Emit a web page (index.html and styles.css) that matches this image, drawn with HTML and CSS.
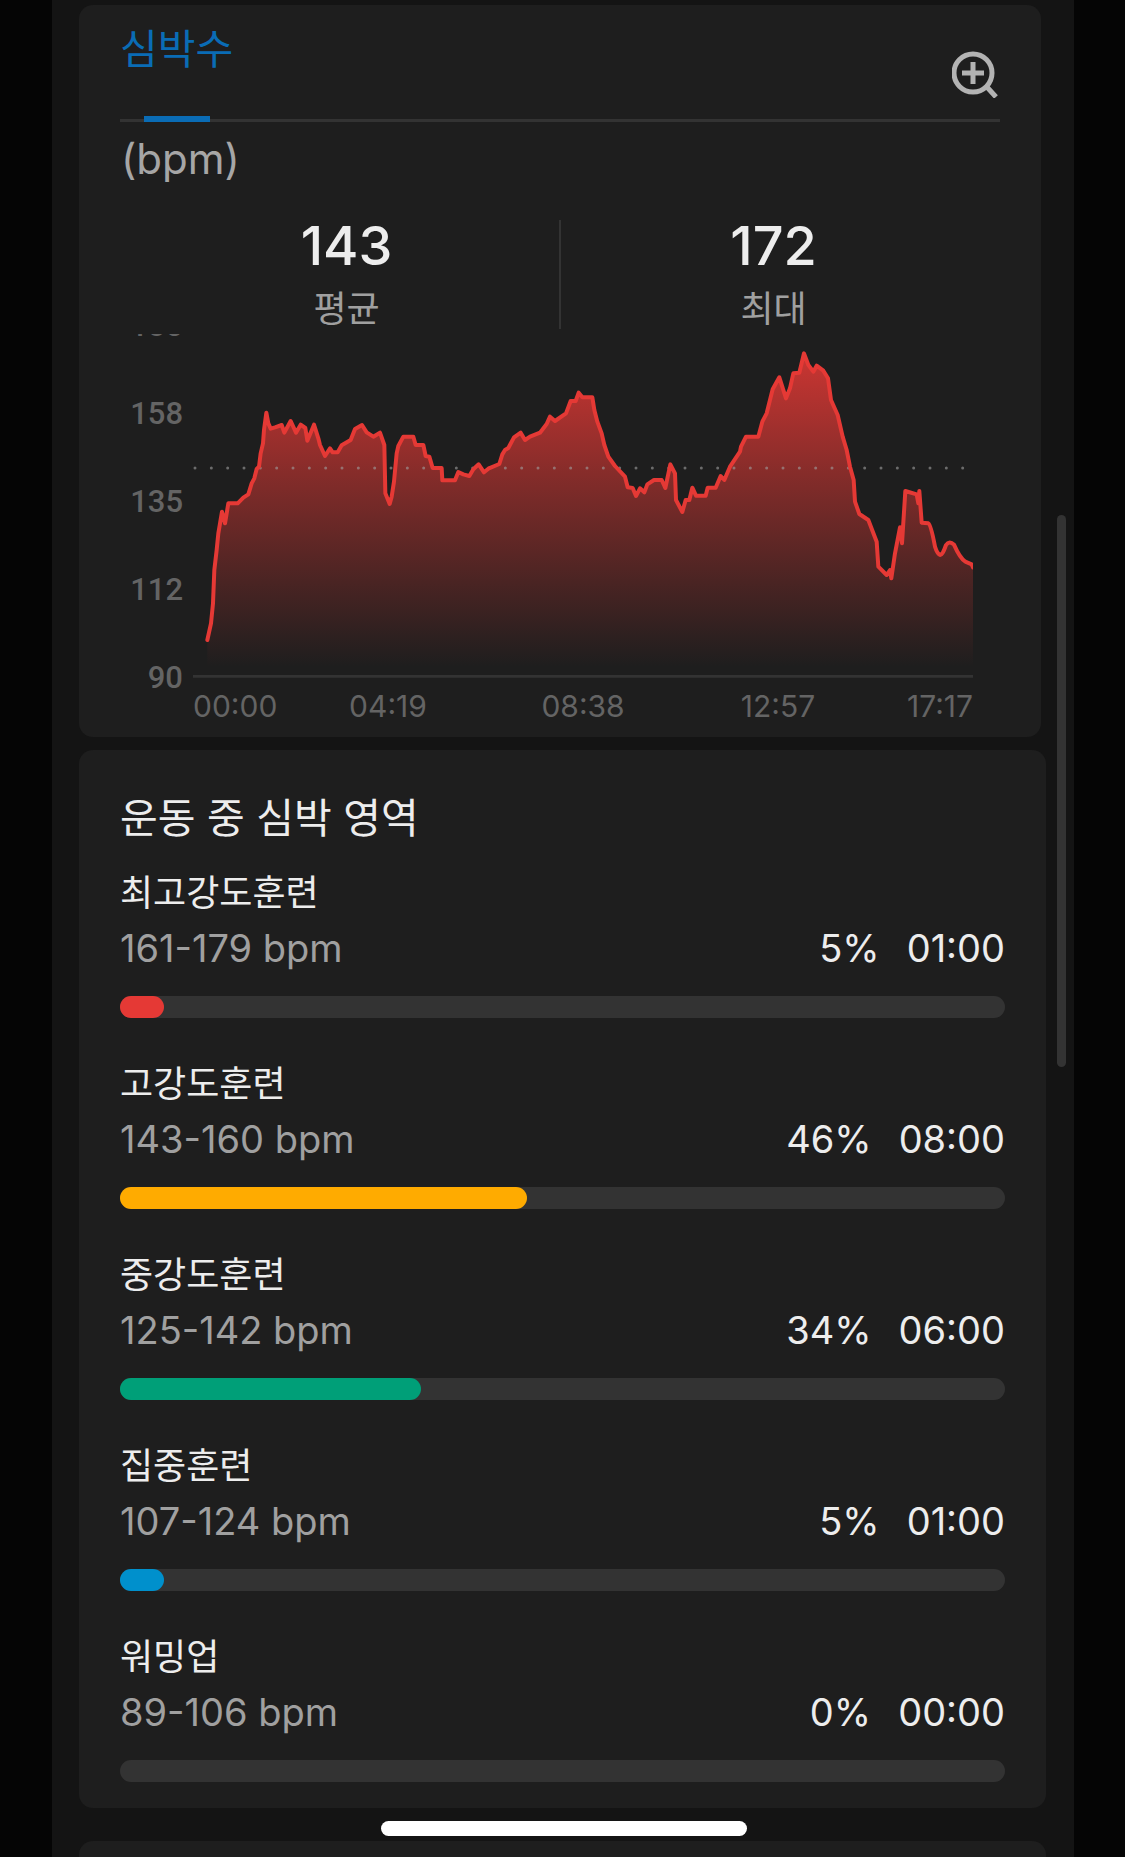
FILE: index.html
```html
<!DOCTYPE html>
<html lang="ko">
<head>
<meta charset="utf-8">
<meta name="viewport" content="width=device-width, initial-scale=1">
<title>심박수</title>
<link rel="stylesheet" href="styles.css">
</head>
<body>
<main class="screen">
  <section class="card card-chart">
    <header class="tabs">
      <a class="tab" href="#heart-rate">심박수</a>
      <button class="zoom" type="button" aria-label="확대">
        <svg viewBox="0 0 48 48" width="48" height="48" fill="none" stroke="currentColor" stroke-width="5">
          <circle cx="21" cy="23" r="19"/>
          <path d="M21 12v22M10 23h22M34 36l10 11"/>
        </svg>
      </button>
    </header>
    <p class="unit" id="heart-rate">(bpm)</p>
    <div class="stats">
      <div class="stat"><strong class="stat-value">143</strong><span class="stat-label">평균</span></div>
      <div class="stat-divider"></div>
      <div class="stat"><strong class="stat-value">172</strong><span class="stat-label">최대</span></div>
    </div>
    <div class="chart">
      <div class="y-axis"><span>180</span><span>158</span><span>135</span><span>112</span><span>90</span></div>
      <div class="plot">
        <svg class="plot-svg" viewBox="579 42 2340 1041" preserveAspectRatio="none" aria-hidden="true">
          <defs>
            <linearGradient id="fade" gradientUnits="userSpaceOnUse" x1="0" y1="100" x2="0" y2="1040">
              <stop offset="0" stop-color="#e53935" stop-opacity=".87"/>
              <stop offset=".43" stop-color="#e53935" stop-opacity=".48"/>
              <stop offset=".72" stop-color="#e53935" stop-opacity=".23"/>
              <stop offset="1" stop-color="#e53935" stop-opacity="0"/>
            </linearGradient>
            <path id="pulse" d="M622,960 633,910 639,850 643,750 650,690 655,640 666,575 675,610 685,550 713,550 730,533 745,523 755,490 763,475 770,447 777,440 782,400 789,370 792,330 799,278 805,310 812,326 825,322 845,315 853,338 872,303 888,338 902,314 916,324 922,362 942,314 955,355 960,375 975,408 990,385 998,397 1013,397 1025,376 1052,360 1065,327 1086,315 1100,337 1120,350 1140,338 1153,375 1156,520 1169,552 1175,530 1182,485 1190,400 1195,378 1210,350 1240,350 1247,375 1270,375 1277,408 1288,410 1298,444 1325,444 1327,481 1365,481 1375,456 1390,463 1408,468 1420,448 1436,433 1452,457 1465,446 1498,432 1507,403 1515,390 1525,384 1542,352 1562,338 1575,360 1590,350 1620,338 1640,312 1650,290 1665,303 1698,280 1712,243 1727,243 1736,218 1747,232 1777,232 1783,270 1792,305 1805,340 1813,375 1825,410 1845,438 1875,470 1883,502 1898,504 1908,528 1920,505 1933,517 1942,493 1962,480 1985,480 1996,504 2011,433 2025,460 2028,540 2047,576 2057,540 2068,540 2077,503 2088,527 2117,527 2123,503 2147,503 2162,468 2173,480 2190,440 2220,395 2223,380 2238,350 2275,350 2287,305 2300,280 2318,208 2338,172 2358,235 2370,205 2380,160 2398,158 2412,100 2425,135 2440,155 2450,137 2470,152 2484,175 2493,240 2513,285 2528,350 2540,390 2550,440 2561,480 2565,545 2578,582 2605,600 2630,665 2635,740 2660,765 2670,750 2674,775 2685,700 2700,622 2706,670 2716,513 2750,523 2755,550 2758,513 2765,608 2785,610Q2793,615 2805,680Q2812,703 2821,705Q2828,705 2838,675Q2848,660 2862,674Q2880,715 2896,725L2915,733 2919,742"/>
            <path id="area" d="M622,960 633,910 639,850 643,750 650,690 655,640 666,575 675,610 685,550 713,550 730,533 745,523 755,490 763,475 770,447 777,440 782,400 789,370 792,330 799,278 805,310 812,326 825,322 845,315 853,338 872,303 888,338 902,314 916,324 922,362 942,314 955,355 960,375 975,408 990,385 998,397 1013,397 1025,376 1052,360 1065,327 1086,315 1100,337 1120,350 1140,338 1153,375 1156,520 1169,552 1175,530 1182,485 1190,400 1195,378 1210,350 1240,350 1247,375 1270,375 1277,408 1288,410 1298,444 1325,444 1327,481 1365,481 1375,456 1390,463 1408,468 1420,448 1436,433 1452,457 1465,446 1498,432 1507,403 1515,390 1525,384 1542,352 1562,338 1575,360 1590,350 1620,338 1640,312 1650,290 1665,303 1698,280 1712,243 1727,243 1736,218 1747,232 1777,232 1783,270 1792,305 1805,340 1813,375 1825,410 1845,438 1875,470 1883,502 1898,504 1908,528 1920,505 1933,517 1942,493 1962,480 1985,480 1996,504 2011,433 2025,460 2028,540 2047,576 2057,540 2068,540 2077,503 2088,527 2117,527 2123,503 2147,503 2162,468 2173,480 2190,440 2220,395 2223,380 2238,350 2275,350 2287,305 2300,280 2318,208 2338,172 2358,235 2370,205 2380,160 2398,158 2412,100 2425,135 2440,155 2450,137 2470,152 2484,175 2493,240 2513,285 2528,350 2540,390 2550,440 2561,480 2565,545 2578,582 2605,600 2630,665 2635,740 2660,765 2670,750 2674,775 2685,700 2700,622 2706,670 2716,513 2750,523 2755,550 2758,513 2765,608 2785,610Q2793,615 2805,680Q2812,703 2821,705Q2828,705 2838,675Q2848,660 2862,674Q2880,715 2896,725L2915,733 2919,742V1066H622Z"/>
          </defs>
          <use href="#area" fill="url(#fade)"/>
          <path class="average" d="M585,444H2900"/>
          <path class="baseline" d="M579,1069H2919"/>
          <use class="pulse" href="#pulse"/>
        </svg>
        <div class="x-axis"><span>00:00</span><span>04:19</span><span>08:38</span><span>12:57</span><span>17:17</span></div>
      </div>
    </div>
  </section>

  <section class="card card-zones">
    <h2 class="zones-title">운동 중 심박 영역</h2>
    <ul class="zones">
      <li class="zone">
        <h3 class="zone-name">최고강도훈련</h3>
        <div class="zone-row"><span class="zone-range">161-179 bpm</span><span>5%</span><span>01:00</span></div>
        <div class="bar"><div class="fill fill-max" style="width:5%"></div></div>
      </li>
      <li class="zone">
        <h3 class="zone-name">고강도훈련</h3>
        <div class="zone-row"><span class="zone-range">143-160 bpm</span><span>46%</span><span>08:00</span></div>
        <div class="bar"><div class="fill fill-high" style="width:46%"></div></div>
      </li>
      <li class="zone">
        <h3 class="zone-name">중강도훈련</h3>
        <div class="zone-row"><span class="zone-range">125-142 bpm</span><span>34%</span><span>06:00</span></div>
        <div class="bar"><div class="fill fill-mid" style="width:34%"></div></div>
      </li>
      <li class="zone">
        <h3 class="zone-name">집중훈련</h3>
        <div class="zone-row"><span class="zone-range">107-124 bpm</span><span>5%</span><span>01:00</span></div>
        <div class="bar"><div class="fill fill-focus" style="width:5%"></div></div>
      </li>
      <li class="zone">
        <h3 class="zone-name">워밍업</h3>
        <div class="zone-row"><span class="zone-range">89-106 bpm</span><span>0%</span><span>00:00</span></div>
        <div class="bar"></div>
      </li>
    </ul>
  </section>

  <section class="card card-next"></section>
</main>
<div class="scroll-thumb"></div>
<div class="home-indicator"></div>
</body>
</html>
```
FILE: styles.css
```css
* { box-sizing: border-box; }

body {
  margin: 0;
  padding: 0 51px 0 52px;
  background: #050505;
  color: #ededed;
  font-family: Inter, "Noto Sans CJK KR", sans-serif;
}

h2, h3, p, ul { margin: 0; padding: 0; font-weight: 400; }
ul { list-style: none; }

.screen {
  min-height: 100vh;
  display: flex;
  flex-direction: column;
  padding: 5px 28px 0 27px;
  background: #141414;
}

.card {
  padding: 0 41px;
  border-radius: 14px;
  background: #1e1e1e;
}

.card-chart { margin-right: 5px; padding-bottom: 12px; }

.tabs {
  position: relative;
  display: flex;
  justify-content: space-between;
  height: 117px;
  border-bottom: 3px solid #333;
}
.tabs::after {
  content: "";
  position: absolute;
  left: 24px;
  bottom: -3px;
  width: 66px;
  height: 6px;
  background: #0a6cb5;
}
.tab {
  padding-top: 14px;
  color: #0a6cb5;
  font-size: 41px;
  line-height: 60px;
  text-decoration: none;
}
.zoom {
  align-self: flex-start;
  margin-top: 45px;
  padding: 0;
  border: 0;
  background: none;
  color: #b3b3b3;
}
.zoom svg { display: block; }

.unit {
  margin-top: 9px;
  padding-left: 1px;
  color: #a6a6a6;
  font-size: 42px;
  line-height: 56px;
}

.stats {
  display: flex;
  align-items: center;
  margin: 29px 14px 0;
  height: 116px;
}
.stat {
  flex: 1;
  display: flex;
  flex-direction: column;
  align-items: center;
  gap: 9px;
}
.stat-value { font-size: 54px; font-weight: 500; line-height: 60px; }
.stat-label { color: #a0a0a0; font-size: 36px; line-height: 48px; }
.stat-divider { width: 2px; height: 109px; background: #333; }

.chart {
  display: flex;
  gap: 10px;
  height: 391px;
  margin: 2px 27px 0 0;
  overflow: hidden;
}
.y-axis {
  width: 63px;
  margin-top: -52px;
  display: flex;
  flex-direction: column;
  color: #646464;
  font-family: Roboto, sans-serif;
  font-size: 31px;
  font-weight: 500;
  line-height: 88px;
  text-align: right;
}
.plot { flex: 1; min-width: 0; }
.plot-svg { display: block; width: 100%; height: 347px; }
.average {
  fill: none;
  stroke: #a0a0a0;
  stroke-opacity: .6;
  stroke-width: 9;
  stroke-linecap: round;
  stroke-dasharray: 0 49;
}
.baseline { stroke: #333; stroke-width: 8; }
.pulse {
  fill: none;
  stroke: #e53935;
  stroke-width: 12;
  stroke-linejoin: round;
  stroke-linecap: round;
}
.x-axis {
  display: grid;
  grid-template-columns: 1fr 2fr 2fr 2fr 1fr;
  margin-top: 7px;
  color: #646464;
  font-size: 30px;
  line-height: 36px;
  text-align: center;
}
.x-axis span:first-child { text-align: left; }
.x-axis span:last-child { justify-self: end; }

.card-zones { margin-top: 13px; padding-top: 38px; padding-bottom: 26px; }
.zones-title { font-size: 41px; line-height: 60px; }
.zones {
  display: flex;
  flex-direction: column;
  gap: 38px;
  margin-top: 17px;
}
.zone-name { font-size: 36px; line-height: 56px; }
.zone-row {
  display: flex;
  gap: 27px;
  font-size: 38px;
  line-height: 54px;
}
.zone-range { flex: 1; color: #a0a0a0; }
.bar {
  height: 22px;
  margin-top: 21px;
  border-radius: 11px;
  background: #333;
}
.fill { height: 100%; border-radius: 11px; }
.fill-max { background: #e53935; }
.fill-high { background: #ffab00; }
.fill-mid { background: #009f78; }
.fill-focus { background: #0090cc; }

.card-next {
  flex: 1;
  min-height: 16px;
  margin-top: 33px;
  border-radius: 14px 14px 0 0;
}

.scroll-thumb {
  position: fixed;
  top: 515px;
  right: 59px;
  width: 9px;
  height: 552px;
  border-radius: 5px;
  background: #333;
}
.home-indicator {
  position: fixed;
  bottom: 21px;
  left: 50%;
  width: 366px;
  height: 15px;
  margin-left: -182px;
  border-radius: 8px;
  background: #fff;
}
```
